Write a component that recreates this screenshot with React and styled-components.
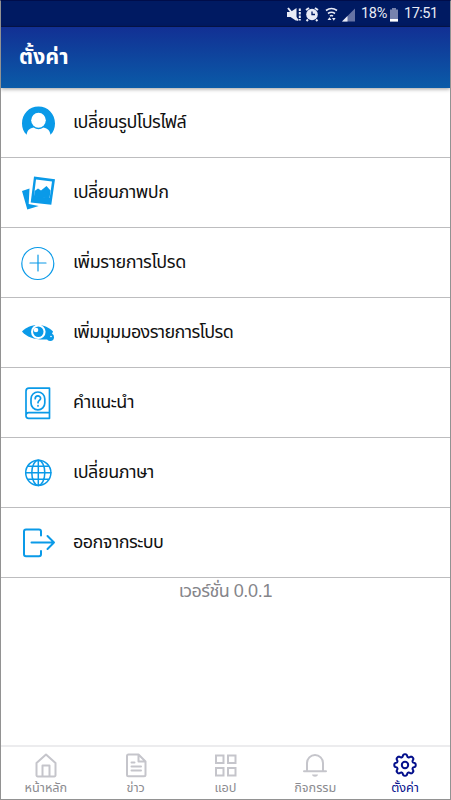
import React from 'react';
import styled, { createGlobalStyle } from 'styled-components';

const BLUE = '#0a9ae8';

const GlobalStyle = createGlobalStyle`
  * { box-sizing: border-box; }
  body { margin: 0; background: #fff; }
`;

const Screen = styled.div`
  width: 451px;
  height: 800px;
  display: flex;
  flex-direction: column;
  overflow: hidden;
  background: #fff;
  border: 1px solid #929292;
  border-top-color: #000d4a;
  font-family: "Liberation Sans", "Noto Sans Thai", sans-serif;
`;

const StatusBar = styled.div`
  height: 26px;
  flex: none;
  display: flex;
  align-items: center;
  justify-content: flex-end;
  padding-right: 12px;
  background: #001a62;
  border-bottom: 1px solid #06164c;
  color: #e8ebf6;
`;

const StatusIcons = styled.svg`
  display: block;
  flex: none;
  width: 72px;
  height: 20px;
  margin-right: 3px;
`;

const BatteryIcon = styled.svg`
  display: block;
  flex: none;
  width: 10px;
  height: 20px;
  margin-right: 5px;
`;

const StatusText = styled.span`
  flex: none;
  width: ${(p) => p.$width}px;
  font-family: Roboto, sans-serif;
  font-size: 14.5px;
  line-height: 20px;
  white-space: nowrap;
  letter-spacing: ${(p) => p.$spacing}px;
`;

const Header = styled.header`
  height: 61px;
  flex: none;
  display: flex;
  align-items: center;
  padding: 0 0 2px 18px;
  background: linear-gradient(#123094, #0a5ba8);
  box-shadow: 0 1px 4px rgba(0, 0, 0, 0.4);
`;

const Title = styled.h1`
  margin: 0;
  color: #fff;
  font-size: 21.5px;
  line-height: 30px;
  font-weight: 700;
`;

const Menu = styled.ul`
  list-style: none;
  margin: 0;
  padding: 0;
`;

const MenuRow = styled.li`
  height: 70px;
  display: flex;
  align-items: center;
  padding-left: 16px;
  border-bottom: 1px solid #bdbdbf;
`;

const RowIcon = styled.svg`
  display: block;
  flex: none;
  width: 40px;
  height: 40px;
  margin-right: 16px;
  color: ${BLUE};
`;

const RowLabel = styled.span`
  padding-bottom: 2px;
  color: #111;
  font-size: 18px;
  line-height: 30px;
  white-space: nowrap;
  letter-spacing: ${(p) => p.$spacing}px;
`;

const Version = styled.div`
  flex: 1;
  color: #85858a;
  text-align: center;
  font-size: 18px;
  line-height: 27px;
  letter-spacing: -0.6px;
`;

const VersionNumber = styled.span`
  letter-spacing: -0.3px;
`;

const TabBar = styled.nav`
  height: 54px;
  flex: none;
  display: grid;
  grid-template-columns: repeat(5, 1fr);
  border-top: 2px solid #ececee;
`;

const Tab = styled.div`
  display: flex;
  flex-direction: column;
  align-items: center;
  color: ${(p) => (p.$active ? '#04108c' : '#8b8b90')};
`;

const TabIcon = styled.svg`
  display: block;
  flex: none;
  width: 28px;
  height: 28px;
  margin-top: 4px;
  color: ${(p) => (p.$active ? '#04108c' : '#c5c5cb')};
`;

const TabLabel = styled.span`
  font-size: 12.7px;
  line-height: 18px;
  white-space: nowrap;
`;

const gearPath = (() => {
  const pts = [];
  for (let i = 0; i <= 160; i += 1) {
    const a = (i / 160) * Math.PI * 2;
    const r = 9.4 + 1.35 * Math.tanh(1.6 * Math.cos(8 * a) + 0.4);
    pts.push(`${(14 + r * Math.sin(a)).toFixed(2)} ${(14 - r * Math.cos(a)).toFixed(2)}`);
  }
  return `M${pts.join('L')}Z`;
})();

const stroke = (w) => ({
  fill: 'none',
  stroke: 'currentColor',
  strokeWidth: w,
  strokeLinecap: 'round',
  strokeLinejoin: 'round',
});

const rows = [
  {
    label: 'เปลี่ยนรูปโปรไฟล์',
    spacing: -0.55,
    icon: (
      <>
        <path
          fill="currentColor"
          d="M9.700 31.800C6.500 29 5 25 5 20.500 5 11 12 3.500 21.500 3.500S38 11 38 20.500C38 25 36.500 29 33.500 31.800 33 28 31 25.500 26.500 24.500Q21.500 28 16.500 24.500C12 25.500 10 28 9.700 31.800z"
        />
        <ellipse cx="21.500" cy="17.300" rx="7.300" ry="7.500" fill="#fff" />
      </>
    ),
  },
  {
    label: 'เปลี่ยนภาพปก',
    spacing: -0.48,
    icon: (
      <>
        <path fill="currentColor" d="M5 18l7.500-2.500L11.700 31l10 2-11.400 3.500z" />
        <path fill="currentColor" fillRule="evenodd" d="M17 3.500L38 6.200 34.300 31.800 13.700 29.500zM19 6.500L17 22.800 32.700 25 35 8.500z" />
        <path fill="currentColor" d="M17 23.500l.6-5.500 3.400-2.500 3 2 5.500-4.500 4 4.500-1 8z" />
      </>
    ),
  },
  {
    label: 'เพิ่มรายการโปรด',
    spacing: -0.42,
    icon: (
      <g {...stroke(1.2)}>
        <circle cx="20.800" cy="20.500" r="16" />
        <path d="M13 20h16M21 12v16" />
      </g>
    ),
  },
  {
    label: 'เพิ่มมุมมองรายการโปรด',
    spacing: -0.63,
    icon: (
      <>
        <path fill="currentColor" d="M5 18.500C9 14.500 14 12 21 12c6 0 11 2.500 15 6.500l-2.500 6-3.500 2C18 27 10 24.500 5 18.500z" />
        <circle cx="21.300" cy="18.800" r="7.300" fill="#fff" />
        <circle cx="21.300" cy="18.800" r="5.200" fill="currentColor" />
        <circle cx="19" cy="17" r="2.300" fill="#fff" />
        <circle cx="33.300" cy="24.200" r="3.700" fill="currentColor" />
        <circle cx="34" cy="23.500" r="0.800" fill="#fff" />
      </>
    ),
  },
  {
    label: 'คำแนะนำ',
    spacing: -0.6,
    icon: (
      <g {...stroke(1.7)} transform="translate(0 -2.300)">
        <path d="M32.500 32.500V7.500H12a3 3 0 0 0-3 3v24.500a2.600 2.600 0 0 0 2.600 2.600H32.500M9 34.500a2.600 2.600 0 0 1 2.600-2.500H32.500v5.600" />
        <rect x="14" y="11.300" width="13.800" height="17.800" rx="6.900" />
        <path d="M18.200 18c0-3.600 5.400-3.600 5.400-.3 0 2-2.600 2-2.600 4.300M21 25v.2" />
      </g>
    ),
  },
  {
    label: 'เปลี่ยนภาษา',
    spacing: -0.45,
    icon: (
      <g {...stroke(1.5)}>
        <circle cx="21.300" cy="19.800" r="12.600" />
        <ellipse cx="21.300" cy="19.800" rx="6.500" ry="12.600" />
        <path d="M8.700 19.800h25.200M21.300 7.200v25.200M11.300 13.300h20M11.300 26.300h20" />
      </g>
    ),
  },
  {
    label: 'ออกจากระบบ',
    spacing: -0.53,
    icon: (
      <g {...stroke(2)}>
        <path d="M24 12.500V8.500a2 2 0 0 0-2-2H9a2 2 0 0 0-2 2v22.700a2 2 0 0 0 2 2h13a2 2 0 0 0 2-2V28M14.500 19.500H37M30.500 13L37 19.500l-6.500 6.500" />
      </g>
    ),
  },
];

const tabs = [
  {
    label: 'หน้าหลัก',
    icon: (
      <g {...stroke(2)}>
        <path d="M4.500 12L14 3.500l9.500 8.500v12.200a1.200 1.200 0 0 1-1.200 1.200H5.700a1.200 1.200 0 0 1-1.200-1.200zM10.500 25v-10.500h7V25" />
      </g>
    ),
  },
  {
    label: 'ข่าว',
    icon: (
      <g {...stroke(2)}>
        <path d="M16.500 3.500H6.500a1.500 1.500 0 0 0-1.500 1.500v18.800a1.500 1.500 0 0 0 1.500 1.500h15.500a1.500 1.500 0 0 0 1.500-1.500V10.500zv7h7M9.500 11.500h3M9.500 15.500h9.500M9.500 19.500h9.500" />
      </g>
    ),
  },
  {
    label: 'แอป',
    icon: (
      <g {...stroke(2)} strokeLinejoin="miter">
        <path d="M5 4.500h7.500v7.500H5zM17 4.500h7.500v7.500H17zM5 17h7.500v7.500H5zM17 17h7.500v7.500H17z" />
      </g>
    ),
  },
  {
    label: 'กิจกรรม',
    icon: (
      <>
        <path {...stroke(2)} d="M3 20.300h22M6 20V12a8 8 0 0 1 16 0v8" />
        <path fill="currentColor" d="M11 23.500h6c-.5 3-5.500 3-6 0z" />
      </>
    ),
  },
  {
    label: 'ตั้งค่า',
    active: true,
    icon: (
      <g {...stroke(2)}>
        <path d={gearPath} />
        <circle cx="14" cy="14" r="3.200" />
      </g>
    ),
  },
];

export default function App() {
  return (
    <>
      <GlobalStyle />
      <Screen>
        <StatusBar>
          <StatusIcons viewBox="0 0 72 20" fill="#e8ebf6">
            <path d="M1 8h3.500L10.500 4v13l-6-4H1z" />
            <path d="M2 4l10 12.500" stroke="#e8ebf6" strokeWidth="2" />
            <path d="M13.800 4.500v12" stroke="#e8ebf6" strokeWidth="2" strokeDasharray="2.500 1" />
            <circle cx="26" cy="10.500" r="5.800" />
            <path d="M20 6l3-2M32 6l-3-2M22 15.500l-1.500 1.500M30 15.500l1.500 1.500" stroke="#e8ebf6" strokeWidth="2" />
            <path d="M26 7.500v3h3" stroke="#001a62" fill="none" strokeWidth="1.300" />
            <path d="M40 6.500q5.500-4 11 0M42 9.500q3.500-2.500 7 0M44 12q1.500-1 3 0" stroke="#e8ebf6" strokeWidth="1.600" fill="none" />
            <path d="M41.500 16l2-2.800 2 2.800zM46 14h3.600l-1.800 2.800z" />
            <path d="M56 17.500L69 4.500v13z" fill="#6673a4" />
            <path d="M56 17.500l5.500-5.500v5.500z" />
          </StatusIcons>
          <StatusText $width={28} $spacing={-0.3}>18%</StatusText>
          <BatteryIcon viewBox="0 0 10 20">
            <path d="M3 4h4v1.500h2v12H1v-12h2z" fill="#7783ae" />
            <path d="M1 15h8v2.500H1z" fill="#fff" />
          </BatteryIcon>
          <StatusText $width={34} $spacing={-0.5}>17:51</StatusText>
        </StatusBar>
        <Header>
          <Title>ตั้งค่า</Title>
        </Header>
        <Menu>
          {rows.map((r) => (
            <MenuRow key={r.label}>
              <RowIcon viewBox="0 0 40 40">{r.icon}</RowIcon>
              <RowLabel $spacing={r.spacing}>{r.label}</RowLabel>
            </MenuRow>
          ))}
        </Menu>
        <Version>
          เวอร์ชั่น <VersionNumber>0.0.1</VersionNumber>
        </Version>
        <TabBar>
          {tabs.map((t) => (
            <Tab key={t.label} $active={t.active}>
              <TabIcon viewBox="0 0 28 28" $active={t.active}>{t.icon}</TabIcon>
              <TabLabel>{t.label}</TabLabel>
            </Tab>
          ))}
        </TabBar>
      </Screen>
    </>
  );
}
